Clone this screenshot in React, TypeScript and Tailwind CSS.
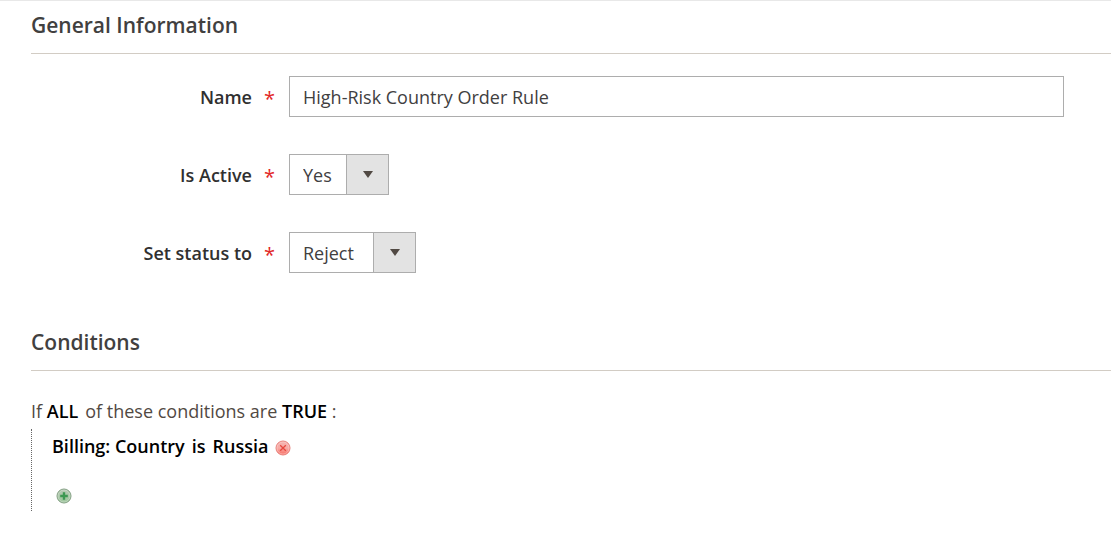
import { ReactNode } from 'react';
import clsx from 'clsx';

interface Option {
    value: string;
    label: string;
}

const activeOptions: Option[] = [
    { value: '1', label: 'Yes' },
    { value: '0', label: 'No' },
];

const statusOptions: Option[] = [
    { value: 'reject', label: 'Reject' },
    { value: 'approve', label: 'Approve' },
];

function SectionTitle({ children }: { children: ReactNode }) {
    return (
        <h2 className="border-b border-[#d2ccc4] pb-3 text-[21px] leading-8 font-semibold text-[#41403f]">
            {children}
        </h2>
    );
}

function Field({ id, label, children }: { id: string; label: string; children: ReactNode }) {
    return (
        <div className="flex items-center">
            <label htmlFor={id} className="flex w-[244px] shrink-0 justify-end gap-3 font-semibold text-[#303030]">
                <span className="pt-0.5">{label}</span>
                <span className="pt-1 text-xl leading-6 font-normal text-[#e22626]">*</span>
            </label>
            <div className="ml-[14px] flex grow">{children}</div>
        </div>
    );
}

function Select({ id, options, className }: { id: string; options: Option[]; className: string }) {
    return (
        <div className={clsx('relative', className)}>
            <select
                id={id}
                className="h-[41px] w-full appearance-none border border-[#adadad] bg-white pr-11 pl-[13px] text-[#41403f]"
            >
                {options.map(option => (
                    <option key={option.value} value={option.value}>
                        {option.label}
                    </option>
                ))}
            </select>
            {/* Arrow box */}
            <span className="pointer-events-none absolute inset-y-px right-px flex w-[42px] items-center justify-center border-l border-[#adadad] bg-[#e3e3e3]">
                <svg width="10" height="7" viewBox="0 0 10 7" aria-hidden="true">
                    <path d="M0 0h10L5 7z" fill="#514943" />
                </svg>
            </span>
        </div>
    );
}

function RemoveIcon() {
    return (
        <svg width="16" height="16" viewBox="0 0 16 16" aria-hidden="true">
            <defs>
                <linearGradient id="remove-fill" x1="0" y1="0" x2="0" y2="1">
                    <stop offset="0" stopColor="#f3b5b2" />
                    <stop offset="0.5" stopColor="#f8aaa5" />
                    <stop offset="1" stopColor="#f8695f" />
                </linearGradient>
            </defs>
            <circle cx="8" cy="8" r="7" fill="url(#remove-fill)" stroke="#e87f79" />
            <circle cx="8" cy="8" r="6" fill="none" stroke="#fcd3cf" strokeOpacity="0.5" />
            <path d="M5.2 5.2l5.6 5.6M10.8 5.2l-5.6 5.6" stroke="#e5483f" strokeWidth="1.3" />
        </svg>
    );
}

function AddIcon() {
    return (
        <svg width="16" height="16" viewBox="0 0 16 16" aria-hidden="true">
            <defs>
                <linearGradient id="add-fill" x1="0" y1="0" x2="0" y2="1">
                    <stop offset="0" stopColor="#b9c9b6" />
                    <stop offset="1" stopColor="#9cc79c" />
                </linearGradient>
            </defs>
            <circle cx="8" cy="8" r="7" fill="url(#add-fill)" stroke="#7f9c7f" />
            <circle cx="8" cy="8" r="6" fill="none" stroke="#d6e4d3" strokeOpacity="0.5" />
            <path d="M8 4.2v7.6M4.2 8h7.6" stroke="#3d9852" strokeWidth="2.4" />
        </svg>
    );
}

export default function App() {
    return (
        <main className="border-t border-[#e8e8e8] bg-white pl-[31px] font-['Open_Sans',sans-serif] text-[18px] leading-6 text-[#41403f]">
            {/* General Information */}
            <section className="pt-2">
                <SectionTitle>General Information</SectionTitle>
                <div className="mt-[22px] flex flex-col gap-[37px] pr-[47px]">
                    <Field id="name" label="Name">
                        <input
                            id="name"
                            type="text"
                            defaultValue="High-Risk Country Order Rule"
                            className="h-[41px] w-full border border-[#adadad] bg-white px-[13px] text-[#41403f]"
                        />
                    </Field>
                    <Field id="is-active" label="Is Active">
                        <Select id="is-active" options={activeOptions} className="w-[100px]" />
                    </Field>
                    <Field id="status" label="Set status to">
                        <Select id="status" options={statusOptions} className="w-[127px]" />
                    </Field>
                </div>
            </section>

            {/* Conditions */}
            <section className="mt-[53px]">
                <SectionTitle>Conditions</SectionTitle>
                <p className="mt-7 text-[#514943]">
                    If{' '}
                    <a href="#aggregator" className="font-semibold text-black">ALL</a>
                    <span className="ml-[7px]">of these conditions are </span>
                    <a href="#value" className="font-semibold text-black">TRUE</a> :
                </p>
                <ul className="mt-[6px] flex flex-col gap-[30px] border-l border-dotted border-[#666666] pt-[5px] pb-[7px] pl-5">
                    <li className="flex items-center gap-[7px] font-semibold text-black">
                        <span>Billing: Country</span>
                        <a href="#operator">is</a>
                        <a href="#country">Russia</a>
                        <button type="button" aria-label="Remove" className="pt-1">
                            <RemoveIcon />
                        </button>
                    </li>
                    <li className="flex pl-1">
                        <button type="button" aria-label="Add">
                            <AddIcon />
                        </button>
                    </li>
                </ul>
            </section>
        </main>
    );
}
